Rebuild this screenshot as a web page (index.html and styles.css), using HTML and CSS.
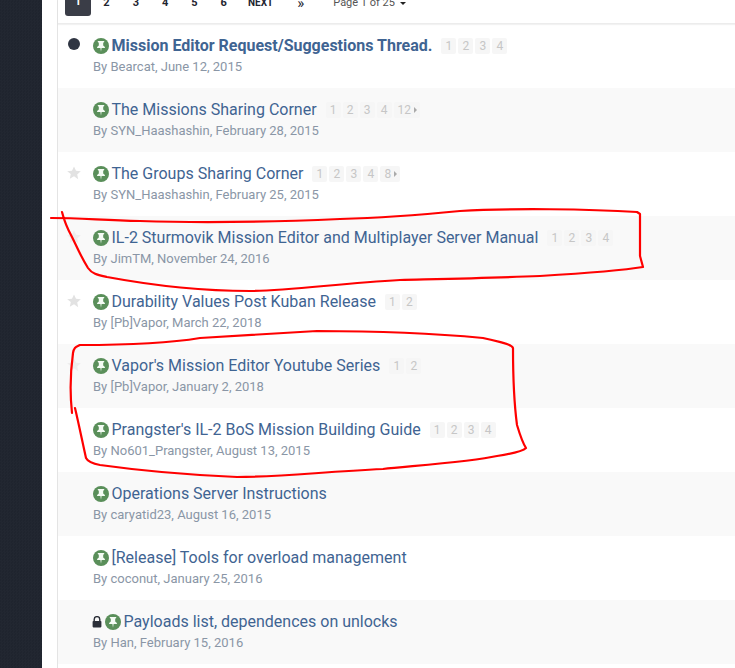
FILE: index.html
```html
<!DOCTYPE html>
<html lang="en">
<head>
<meta charset="utf-8">
<title>Mission Editor topics</title>
<link rel="stylesheet" href="styles.css">
</head>
<body>
<svg width="0" height="0" class="defs"><defs>
<symbol id="pin" viewBox="0 0 16 16"><circle cx="8" cy="8" r="8" fill="#5a8f5a"/><path d="M4.8 3h6.4v1.1l-1 .6v2.7l1.7 1.7v1H8.6L8 13.8l-.6-3.7H4.1v-1l1.7-1.7V4.7l-1-.6z" fill="#f4fbf4"/></symbol>
<symbol id="star" viewBox="0 0 14 14"><path d="M7 .4l2 4.4 4.8.5-3.6 3.2 1 4.7L7 10.3l-4.2 2.4 1-4.7L.2 5.3 5 4.8z" fill="#e2e2e2"/></symbol>
<symbol id="lock" viewBox="0 0 10 12"><path d="M2.2 5V3.4a2.8 2.8 0 0 1 5.6 0V5" fill="none" stroke="#2b2f38" stroke-width="1.4"/><rect x=".6" y="5" width="8.8" height="6.4" rx=".8" fill="#2b2f38"/></symbol>
</defs></svg>
<div class="page">
  <aside class="sidebar"></aside>
  <div class="gutter"></div>
  <main class="content">
    <nav class="pager">
      <span class="pg active">1</span><span class="pg">2</span><span class="pg">3</span><span class="pg">4</span><span class="pg">5</span><span class="pg">6</span>
      <span class="next">NEXT</span><span class="last">»</span>
      <span class="jump">Page 1 of 25<i class="caret"></i></span>
    </nav>
    <ol class="topics">
      <li class="topic">
        <div class="mark"><span class="dot"></span></div>
        <div class="body">
          <div class="head"><svg class="pin"><use href="#pin"/></svg><a class="title strong">Mission Editor Request/Suggestions Thread.</a><span class="chips"><b>1</b><b>2</b><b>3</b><b>4</b></span></div>
          <p class="meta">By Bearcat, June 12, 2015</p>
        </div>
      </li>
      <li class="topic">
        <div class="mark"></div>
        <div class="body">
          <div class="head"><svg class="pin"><use href="#pin"/></svg><a class="title">The Missions Sharing Corner</a><span class="chips"><b>1</b><b>2</b><b>3</b><b>4</b><b class="more">12<i></i></b></span></div>
          <p class="meta">By SYN_Haashashin, February 28, 2015</p>
        </div>
      </li>
      <li class="topic">
        <div class="mark"><svg class="star"><use href="#star"/></svg></div>
        <div class="body">
          <div class="head"><svg class="pin"><use href="#pin"/></svg><a class="title">The Groups Sharing Corner</a><span class="chips"><b>1</b><b>2</b><b>3</b><b>4</b><b class="more">8<i></i></b></span></div>
          <p class="meta">By SYN_Haashashin, February 25, 2015</p>
        </div>
      </li>
      <li class="topic">
        <div class="mark"><svg class="star"><use href="#star"/></svg></div>
        <div class="body">
          <div class="head"><svg class="pin"><use href="#pin"/></svg><a class="title">IL-2 Sturmovik Mission Editor and Multiplayer Server Manual</a><span class="chips"><b>1</b><b>2</b><b>3</b><b>4</b></span></div>
          <p class="meta">By JimTM, November 24, 2016</p>
        </div>
      </li>
      <li class="topic">
        <div class="mark"><svg class="star"><use href="#star"/></svg></div>
        <div class="body">
          <div class="head"><svg class="pin"><use href="#pin"/></svg><a class="title">Durability Values Post Kuban Release</a><span class="chips"><b>1</b><b>2</b></span></div>
          <p class="meta">By [Pb]Vapor, March 22, 2018</p>
        </div>
      </li>
      <li class="topic">
        <div class="mark"><svg class="star"><use href="#star"/></svg></div>
        <div class="body">
          <div class="head"><svg class="pin"><use href="#pin"/></svg><a class="title">Vapor's Mission Editor Youtube Series</a><span class="chips"><b>1</b><b>2</b></span></div>
          <p class="meta">By [Pb]Vapor, January 2, 2018</p>
        </div>
      </li>
      <li class="topic">
        <div class="mark"></div>
        <div class="body">
          <div class="head"><svg class="pin"><use href="#pin"/></svg><a class="title">Prangster's IL-2 BoS Mission Building Guide</a><span class="chips"><b>1</b><b>2</b><b>3</b><b>4</b></span></div>
          <p class="meta">By No601_Prangster, August 13, 2015</p>
        </div>
      </li>
      <li class="topic">
        <div class="mark"></div>
        <div class="body">
          <div class="head"><svg class="pin"><use href="#pin"/></svg><a class="title">Operations Server Instructions</a></div>
          <p class="meta">By caryatid23, August 16, 2015</p>
        </div>
      </li>
      <li class="topic">
        <div class="mark"></div>
        <div class="body">
          <div class="head"><svg class="pin"><use href="#pin"/></svg><a class="title">[Release] Tools for overload management</a></div>
          <p class="meta">By coconut, January 25, 2016</p>
        </div>
      </li>
      <li class="topic">
        <div class="mark"></div>
        <div class="body">
          <div class="head"><svg class="lock"><use href="#lock"/></svg><svg class="pin"><use href="#pin"/></svg><a class="title">Payloads list, dependences on unlocks</a></div>
          <p class="meta">By Han, February 15, 2016</p>
        </div>
      </li>
    </ol>
  </main>
</div>
<svg class="ink" viewBox="0 0 735 668" width="735" height="668" aria-hidden="true">
  <path d="M51 218C80 218 100 220 140 221C200 223 270 222 340 219C380 218 420 215 460 211C510 208 590 209 637 212L640 214L640 256L643 267C625 270 590 273 540 276C490 278 440 279 400 280C340 283 290 291 250 291C200 291 150 285 107 277C98 275 92 274 88 268C80 255 76 245 72 237C67 228 64 220 62 212"/>
  <path d="M72 413C70 395 70 375 73 353C74 347 76 347 80 345C130 345 170 343 200 338C250 335 300 332 317 331C380 331 430 333 483 338C500 342 512 344 513 348C513 370 513 395 517 425C520 435 524 445 526 448C522 452 510 454 497 456C470 462 410 466 383 469C320 472 280 477 237 477C190 475 150 472 100 465C90 463 87 460 86 458C82 440 79 425 75 408"/>
</svg>
</body>
</html>
```
FILE: styles.css
```css
* { box-sizing: border-box; }
html, body { margin: 0; height: 668px; overflow: hidden; }
body { background: #fff; font-family: Roboto, "Liberation Sans", sans-serif; position: relative; }
.defs { position: absolute; }
.page { display: flex; height: 668px; }
.sidebar { width: 42px; flex: none; background: #1f2530 repeating-conic-gradient(#222731 0 25%, #1f242e 0 50%) 0 0 / 3px 3px; }
.gutter { width: 15px; background: #fff; flex: none; }
.content { flex: 1; min-width: 0; border-left: 1px solid #e4e4e4; }

.pager { height: 24px; display: flex; align-items: flex-end; padding: 0 0 7px 7px; border-bottom: 1px solid #ececec; box-shadow: 0 1px 1px rgba(0,0,0,.05); position: relative; font-size: 11px; font-weight: 700; color: #1f2630; overflow: hidden; white-space: nowrap; }
.pg, .next, .last, .jump { line-height: 14px; margin-bottom: 6px; }
.pg { width: 26px; margin-right: 3.3px; text-align: center; }
.pg.active { background: #3a3d47; color: #fff; border-radius: 0 0 3px 3px; height: 24px; line-height: 14px; padding-top: 3px; margin-bottom: 0; margin-right: 2.5px; }
.next { margin-left: 8px; font-size: 10px; }
.last { margin-left: 24px; font-size: 15px; font-weight: 400; }
.jump { margin-left: 29px; font-size: 11px; font-weight: 400; color: #555; display: flex; align-items: center; }
.caret { display: inline-block; margin-left: 5px; border: 3.5px solid transparent; border-top-color: #222; border-bottom-width: 0; }

.topics { list-style: none; margin: 0; padding: 0; }
.topic { display: flex; height: 64px; padding: 12px 0 0 0; background: #fff; }
.topic:nth-child(even) { background: #f9f9f9; }
.mark { width: 35px; flex: none; display: flex; justify-content: center; padding-top: 2px; padding-right: 3px; }
.dot { width: 12px; height: 12px; border-radius: 50%; background: #2f3542; }
.star { width: 14px; height: 14px; }
.topic:nth-child(even) .star { opacity: .5; }
.body { min-width: 0; }
.head { display: flex; align-items: center; height: 19px; }
.pin { width: 16px; height: 16px; flex: none; margin-right: 2.5px; }
.lock { width: 10px; height: 12px; flex: none; margin-right: 3px; margin-left: -1px; }
.title { font-size: 16px; line-height: 19px; color: #3f6492; white-space: nowrap; }
.title.strong { font-weight: 700; }
.chips { display: flex; gap: 2px; margin-left: 9px; }
.chips b { min-width: 15px; height: 16px; padding: 0 2px; background: #f6f6f6; color: #c6c6c6; font-size: 12px; font-weight: 400; line-height: 16px; text-align: center; border-radius: 2px; display: flex; align-items: center; justify-content: center; }
.chips .more { padding: 0 3px 0 4px; }
.more i { display: inline-block; margin-left: 3px; border: 3px solid transparent; border-left-color: #aaa; border-right-width: 0; }
.meta { margin: 4px 0 0; font-size: 13px; line-height: 16px; color: #8a96a6; white-space: nowrap; }

.ink { position: absolute; left: 0; top: 0; pointer-events: none; }
.ink path { fill: none; stroke: #f00; stroke-width: 2.2; stroke-linecap: round; stroke-linejoin: round; }
```
